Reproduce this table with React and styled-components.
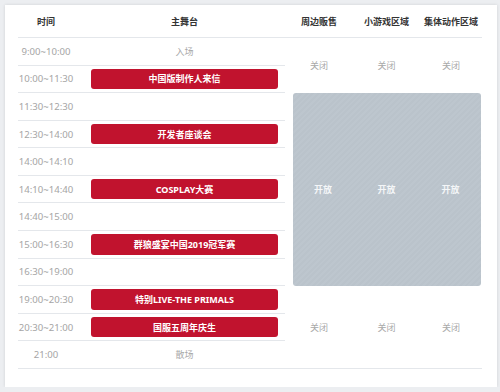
import styled, { createGlobalStyle } from "styled-components";

const GlobalStyle = createGlobalStyle`
  html, body {
    margin: 0;
    padding: 0;
    background: #eceef1;
  }
  body {
    font-family: "Noto Sans", "Noto Sans CJK SC", sans-serif;
  }
`;

const Card = styled.div`
  margin: 5px 0 0 5px;
  width: 492px;
  height: 382px;
  box-sizing: border-box;
  padding: 0 15px 0 13px;
  background: #fff;
  box-shadow: 0 0 3px rgba(0, 0, 0, 0.12);
`;

const Table = styled.div`
  display: grid;
  grid-template-columns: 56px 211px 68px 67px 62px;
  grid-template-rows: 33px repeat(12, 27.58px);
`;

const HeadCell = styled.div`
  display: flex;
  align-items: center;
  justify-content: center;
  padding-left: ${(p) => p.$shift || 0}px;
  border-bottom: 1px solid #e4e7eb;
  font-size: 9px;
  font-weight: 700;
  color: #333;
  white-space: nowrap;
`;

const TimeCell = styled.div`
  display: flex;
  align-items: center;
  justify-content: center;
  border-bottom: 1px solid #e4e7eb;
  font-size: 9.6px;
  color: #a5a5a5;
  white-space: nowrap;
`;

const StageCell = styled.div`
  display: flex;
  align-items: stretch;
  padding: 3px 7px 3px 17px;
  border-bottom: 1px solid #e4e7eb;
  box-sizing: border-box;
`;

const StageText = styled.div`
  flex: 1;
  display: flex;
  align-items: center;
  justify-content: center;
  font-size: 9px;
  color: #a8a8a8;
`;

const EventButton = styled.div`
  flex: 1;
  display: flex;
  align-items: center;
  justify-content: center;
  border-radius: 3px;
  background: #c1132e;
  color: #fff;
  font-size: 9px;
  font-weight: 700;
  white-space: nowrap;
`;

const Zone = styled.div`
  grid-column: 3 / 6;
  grid-row: ${(p) => p.$rows};
  display: grid;
  grid-template-columns: 68px 67px 62px;
  border-bottom: ${(p) => (p.$last ? "1px solid #e4e7eb" : "none")};
`;

const OpenZone = styled(Zone)`
  margin-left: 8px;
  margin-right: 1px;
  grid-template-columns: 60px 67px 61px;
  border-radius: 3px;
  background: repeating-linear-gradient(
    -45deg,
    #bdc6ce 0px,
    #bdc6ce 2px,
    #bac3cb 2px,
    #bac3cb 4px
  );
`;

const ZoneLabel = styled.div`
  display: flex;
  align-items: center;
  justify-content: center;
  font-size: 9px;
  font-weight: ${(p) => (p.$open ? 700 : 400)};
  color: ${(p) => (p.$open ? "#f4f6f8" : "#a8a8a8")};
`;

const schedule = [
  { time: "9:00~10:00", text: "入场" },
  { time: "10:00~11:30", event: "中国版制作人来信" },
  { time: "11:30~12:30" },
  { time: "12:30~14:00", event: "开发者座谈会" },
  { time: "14:00~14:10" },
  { time: "14:10~14:40", event: "COSPLAY大赛" },
  { time: "14:40~15:00" },
  { time: "15:00~16:30", event: "群狼盛宴中国2019冠军赛" },
  { time: "16:30~19:00" },
  { time: "19:00~20:30", event: "特别LIVE-THE PRIMALS" },
  { time: "20:30~21:00", event: "国服五周年庆生" },
  { time: "21:00", text: "散场" },
];

const zones = ["周边贩售", "小游戏区域", "集体动作区域"];

function ZoneRow({ label, open }) {
  return zones.map((z) => (
    <ZoneLabel key={z} $open={open}>
      {label}
    </ZoneLabel>
  ));
}

export default function App() {
  return (
    <>
      <GlobalStyle />
      <Card>
        <Table>
          <HeadCell>时间</HeadCell>
          <HeadCell $shift={10}>主舞台</HeadCell>
          {zones.map((z) => (
            <HeadCell key={z}>{z}</HeadCell>
          ))}

          {schedule.map((row, i) => (
            <Row key={row.time} row={row} index={i} />
          ))}

          <Zone $rows="2 / 4">
            <ZoneRow label="关闭" />
          </Zone>
          <OpenZone $rows="4 / 11">
            <ZoneRow label="开放" open />
          </OpenZone>
          <Zone $rows="11 / 14" $last>
            <ZoneRow label="关闭" />
          </Zone>
        </Table>
      </Card>
    </>
  );
}

function Row({ row, index }) {
  const r = index + 2;
  return (
    <>
      <TimeCell style={{ gridRow: r, gridColumn: 1 }}>{row.time}</TimeCell>
      <StageCell style={{ gridRow: r, gridColumn: 2 }}>
        {row.event ? (
          <EventButton>{row.event}</EventButton>
        ) : (
          <StageText>{row.text}</StageText>
        )}
      </StageCell>
    </>
  );
}
